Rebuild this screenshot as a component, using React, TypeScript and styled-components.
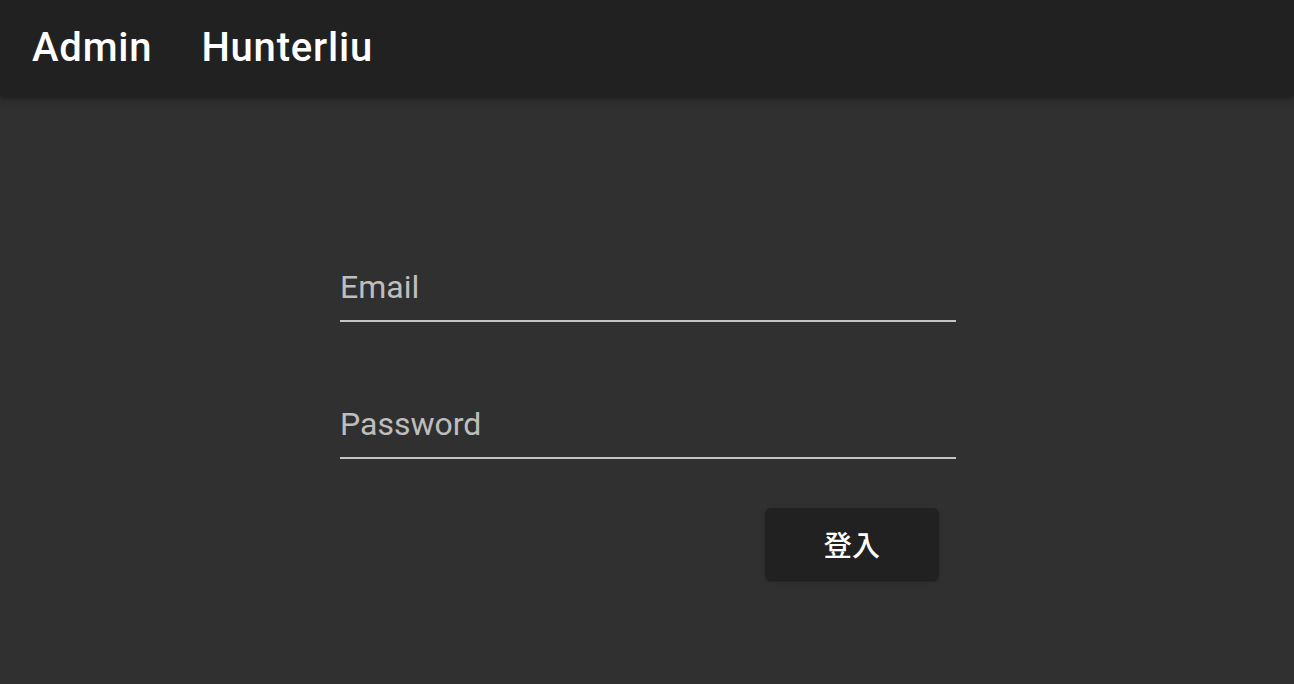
import React from "react";
import styled, { createGlobalStyle } from "styled-components";

const GlobalStyle = createGlobalStyle`
  html, body {
    margin: 0;
    padding: 0;
    background: #303030;
    font-family: Roboto, "Noto Sans CJK TC", "Noto Sans CJK SC", sans-serif;
  }
  #root {
    min-height: 100vh;
  }
`;

const Page = styled.div`
  min-height: 100vh;
  background: #303030;
  display: flex;
  flex-direction: column;
`;

const AppBar = styled.header`
  height: 96px;
  background: #212121;
  display: flex;
  align-items: center;
  padding: 0 32px;
  gap: 49px;
  box-shadow: 0px 2px 4px -1px rgba(0, 0, 0, 0.2), 0px 4px 5px 0px rgba(0, 0, 0, 0.14),
    0px 1px 10px 0px rgba(0, 0, 0, 0.12);
  position: relative;
  z-index: 1;
  box-sizing: border-box;
`;

const Title = styled.span`
  color: #fff;
  font-family: Roboto, sans-serif;
  font-size: 40px;
  font-weight: 500;
  letter-spacing: 0.8px;
  padding-bottom: 2px;
`;

const Main = styled.main`
  display: flex;
  justify-content: center;
  padding-top: 171px;
  padding-left: 2px;
`;

const Form = styled.form`
  width: 616px;
  display: flex;
  flex-direction: column;
  gap: 82px;
`;

const Input = styled.input`
  display: block;
  width: 100%;
  box-sizing: border-box;
  background: transparent;
  border: none;
  border-bottom: 2px solid rgba(255, 255, 255, 0.72);
  padding: 0 0 13px;
  margin: 0;
  font-family: Roboto, sans-serif;
  font-size: 32px;
  line-height: 40px;
  height: 55px;
  color: #fff;
  outline: none;

  &::placeholder {
    color: rgba(255, 255, 255, 0.7);
    opacity: 1;
  }
`;

const Actions = styled.div`
  display: flex;
  justify-content: flex-end;
  padding-right: 17px;
  margin-top: -33px;
`;

const Button = styled.button`
  width: 174px;
  height: 72px;
  flex-shrink: 0;
  border: none;
  border-radius: 6px;
  background: #212121;
  color: #fff;
  font-family: Roboto, "Noto Sans CJK TC", sans-serif;
  font-size: 28px;
  font-weight: 500;
  letter-spacing: 0.3px;
  padding: 0;
  cursor: pointer;
  box-shadow: 0px 3px 1px -2px rgba(0, 0, 0, 0.2), 0px 2px 2px 0px rgba(0, 0, 0, 0.14),
    0px 1px 5px 0px rgba(0, 0, 0, 0.12);
`;

export default function App() {
  return (
    <Page>
      <GlobalStyle />
      <AppBar>
        <Title>Admin</Title>
        <Title>Hunterliu</Title>
      </AppBar>
      <Main>
        <Form onSubmit={(e) => e.preventDefault()}>
          <Input type="email" placeholder="Email" />
          <Input type="password" placeholder="Password" />
          <Actions>
            <Button type="submit">登入</Button>
          </Actions>
        </Form>
      </Main>
    </Page>
  );
}
